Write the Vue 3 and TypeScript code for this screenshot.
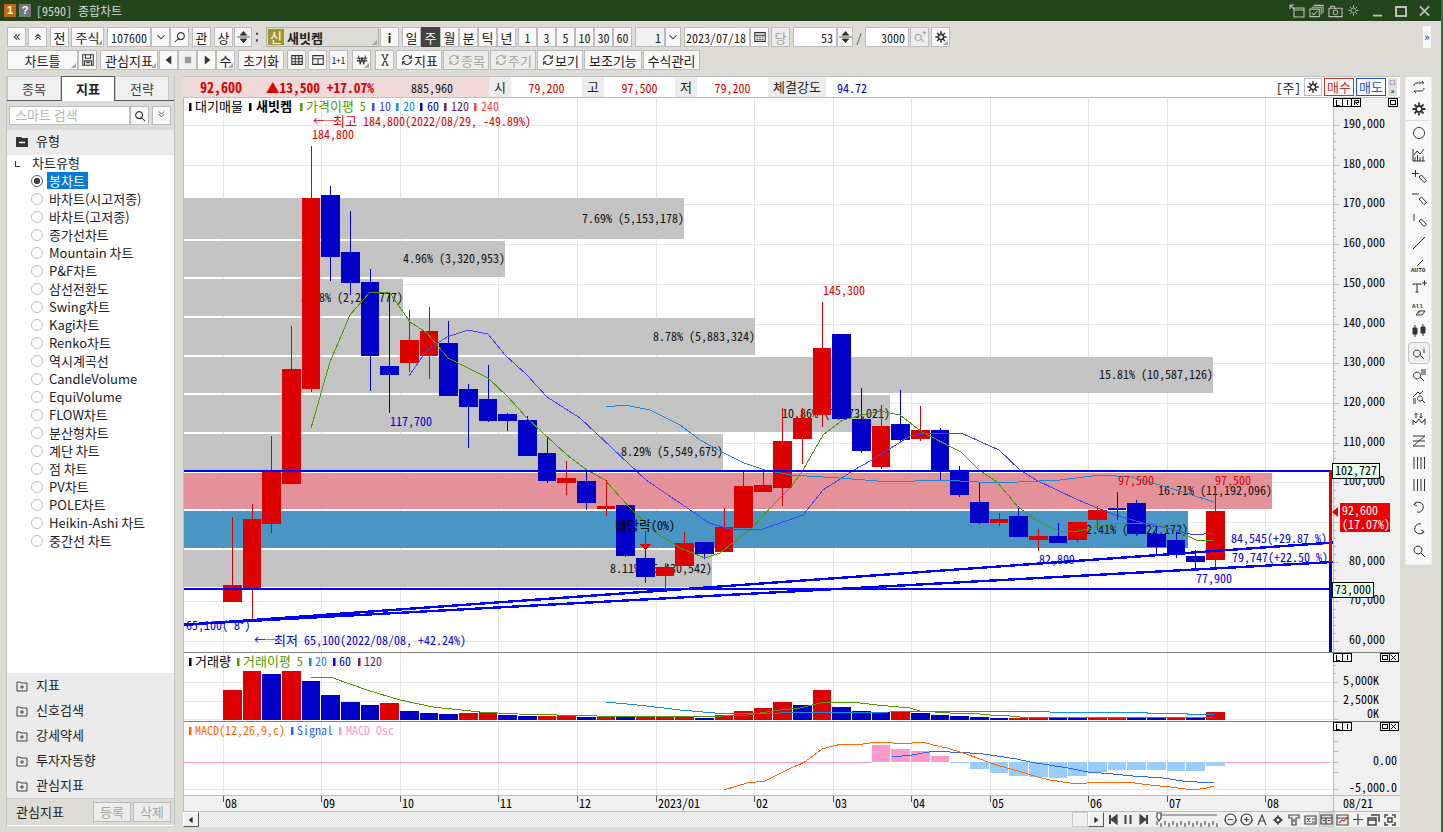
<script setup lang="ts">
type Btn = { t?: string; i?: string; w: number; g?: number; c?: string }
type Glyph = { d: string; t?: string; fill?: boolean; bold?: boolean }

const ICONS: Record<string, string> = {
  dl: 'M8 5L5 8l3 3M11 5L8 8l3 3',
  du: 'M5 8l3-3 3 3M5 11l3-3 3 3',
  chev: 'M4 6l4 4 4-4',
  search: 'M9 3a4 4 0 1 1-.01 0M6 10l-4 4',
  searchR: 'M7 3a4 4 0 1 0 .01 0M10 10l4 4',
  updown: 'M4.500 6l3.500-4 3.500 4zM1 8h14M4.500 10h7L8 14z',
  dots: 'M8 3v2.500M8 10.500V13',
  cal: 'M2 3h12v10H2zM2 6h12M4 8h2M7 8h2M10 8h2M4 10.500h2M7 10.500h2M10 10.500h2',
  qplus: 'M6 5a3.500 3.500 0 1 0 .01 0M9 10l4 4M11 3h4M13 1v4',
  gear: 'M8 1.500v3M8 11.500v3M1.500 8h3M11.500 8h3M3.500 3.500l2 2M10.500 10.500l2 2M12.500 3.500l-2 2M5.500 10.500l-2 2M8 5a3 3 0 1 0 .01 0',
  save: 'M2 2h12v12H2zM5 2v4h6V2M4 9h8v5H4zM6 11h4',
  left: 'M10 4v8L5 8z',
  right: 'M6 4v8l5-4z',
  stop: 'M5 5h6v6H5z',
  grid: 'M2 3h12v10H2zM2 6.500h12M2 10h12M6 3v10M10 3v10',
  layout: 'M2 3h12v10H2zM2 6.500h12M8 6.500V13',
  won: 'M2 6h12M2 9h12M4 3l2 10 2-8 2 8 2-10',
  tool: 'M5 2l6 12M11 2L5 14M4 2h3M9 14h3M9 2h3M4 14h3',
  cycle: 'M3 8a5 5 0 0 1 9-3l1 1M13 8a5 5 0 0 1-9 3l-1-1M13 2.500V6h-3M3 13.500V10h3',
}

const row1: Btn[] = [
  { i: 'dl', w: 19 }, { i: 'du', w: 19, g: 2 }, { t: '전', w: 19, g: 3 }, { t: '주식', w: 33, g: 2, c: 'corner' },
  { t: '107600', w: 44, g: 3, c: 'field' }, { i: 'chev', w: 19 }, { i: 'search', w: 19 },
  { t: '관', w: 19, g: 3 }, { t: '상', w: 19, g: 3 }, { i: 'updown', w: 18, g: 1, c: 'spin' }, { i: 'dots', w: 7, g: 1, c: 'flat' },
]
const periods: Btn[] = [
  { t: 'i', w: 19, g: 1, c: 'strong' }, { t: '일', w: 19, g: 3 }, { t: '주', w: 19, c: 'dark' }, { t: '월', w: 19 }, { t: '분', w: 19 },
  { t: '틱', w: 19 }, { t: '년', w: 19 }, { t: '1', w: 19, g: 2 }, { t: '3', w: 19 }, { t: '5', w: 19 }, { t: '10', w: 19 },
  { t: '30', w: 19 }, { t: '60', w: 19 }, { t: '1', w: 30, g: 3, c: 'field idle' }, { i: 'chev', w: 16 },
  { t: '2023/07/18', w: 66, g: 3, c: 'field' }, { i: 'cal', w: 19 }, { t: '당', w: 19, g: 2, c: 'off' },
  { t: '53', w: 44, g: 3, c: 'field' }, { i: 'updown', w: 16, c: 'spin' }, { t: '/', w: 12, c: 'flat' },
  { t: '3000', w: 44, c: 'field' }, { i: 'qplus', w: 19, g: 1, c: 'off' }, { i: 'gear', w: 19, g: 2, c: 'corner heavy' },
]
const row2: Btn[] = [
  { t: '차트틀', w: 71, c: 'corner' }, { i: 'save', w: 19 }, { t: '관심지표', w: 58, g: 3, c: 'corner' },
  { i: 'left', w: 19, g: 1, c: 'solid' }, { i: 'stop', w: 19, c: 'solid idle' }, { i: 'right', w: 19, c: 'solid' }, { t: '수', w: 19, c: 'corner' },
  { t: '초기화', w: 46, g: 3 }, { i: 'grid', w: 19, g: 3 }, { i: 'layout', w: 19, g: 2 }, { t: '1+1', w: 19, g: 2, c: 'tiny' },
  { i: 'won', w: 19, g: 4, c: 'corner' }, { i: 'tool', w: 19, g: 4 }, { i: 'cycle', t: '지표', w: 46, g: 2 },
  { i: 'cycle', t: '종목', w: 46, g: 1, c: 'off' }, { i: 'cycle', t: '주기', w: 46, g: 1, c: 'off' }, { i: 'cycle', t: '보기', w: 46, g: 1 },
  { t: '보조기능', w: 58, g: 1 }, { t: '수식관리', w: 57, g: 1 },
]

const chartTypes = ['봉차트', '바차트(시고저종)', '바차트(고저종)', '종가선차트', 'Mountain 차트', 'P&F차트', '삼선전환도', 'Swing차트',
  'Kagi차트', 'Renko차트', '역시계곡선', 'CandleVolume', 'EquiVolume', 'FLOW차트', '분산형차트', '계단 차트', '점 차트', 'PV차트',
  'POLE차트', 'Heikin-Ashi 차트', '중간선 차트']
const groups = ['지표', '신호검색', '강세약세', '투자자동향', '관심지표']

const runs = (s: string) => s.match(/[가-힣]+|[^가-힣]+/g) ?? []
const isKo = (s?: string) => !!s && /[가-힣]/.test(s)

// [color, body top, body bottom, wick top, wick bottom] in screen pixels
const raw: [string, number, number, number, number][] = [
  ['r', 585, 602, 517, 602], ['r', 519, 588, 504, 619], ['r', 471, 524, 436, 533], ['r', 369, 484, 326, 484],
  ['r', 198, 389, 146, 392], ['b', 195, 257, 186, 281], ['b', 252, 283, 211, 295], ['b', 282, 356, 269, 391],
  ['b', 366, 375, 294, 413], ['r', 340, 363, 310, 372], ['r', 331, 356, 307, 379], ['b', 343, 396, 321, 396],
  ['b', 389, 407, 384, 448], ['b', 399, 421, 365, 422], ['b', 414, 421, 413, 431], ['b', 420, 456, 416, 456],
  ['b', 453, 481, 437, 483], ['r', 478, 483, 461, 495], ['b', 481, 503, 472, 510], ['r', 506, 509, 480, 516],
  ['b', 505, 556, 505, 557], ['b', 558, 577, 550, 583], ['r', 567, 576, 563, 588], ['r', 543, 566, 532, 566],
  ['b', 542, 554, 542, 559], ['r', 527, 552, 508, 552], ['r', 486, 528, 472, 528], ['r', 485, 492, 472, 492],
  ['r', 441, 488, 408, 506], ['r', 418, 439, 408, 464], ['r', 348, 415, 302, 427], ['b', 334, 419, 334, 419],
  ['b', 419, 451, 388, 453], ['r', 426, 467, 405, 469], ['b', 424, 440, 390, 442], ['r', 430, 439, 406, 441],
  ['b', 430, 470, 428, 480], ['b', 471, 495, 466, 497], ['b', 502, 523, 483, 524], ['r', 519, 523, 513, 526],
  ['b', 516, 537, 506, 537], ['r', 536, 540, 529, 551], ['b', 536, 543, 523, 543], ['r', 522, 540, 522, 542],
  ['r', 510, 520, 506, 530], ['b', 508, 510, 492, 520], ['b', 503, 534, 500, 535], ['b', 534, 547, 526, 556],
  ['b', 540, 555, 530, 558], ['b', 556, 562, 550, 569], ['r', 511, 560, 490, 568],
]
const slotX = (i: number) => 223 + Math.round(i * 19.66)
const slotW = (i: number) => slotX(i + 1) - slotX(i) - 1
const COLORS: Record<string, string> = { r: '#dd0000', b: '#0000c8' }
const candles = raw.map((c, i) => ({
  x: slotX(i), w: slotW(i), cx: slotX(i) + Math.floor(slotW(i) / 2),
  fill: COLORS[c[0]], top: c[1], h: c[2] - c[1], wt: c[3], wb: c[4],
}))

const volRaw: [string, number][] = [
  ['r', 690], ['r', 671], ['b', 674], ['r', 671], ['b', 681], ['b', 695], ['b', 702], ['b', 705], ['r', 703], ['b', 711], ['b', 713],
  ['b', 714], ['r', 713], ['r', 712], ['b', 715], ['b', 716], ['r', 716], ['r', 715], ['b', 717], ['r', 716], ['b', 717], ['r', 716],
  ['r', 716], ['r', 716], ['b', 718], ['r', 715], ['r', 711], ['r', 708], ['r', 702], ['b', 705], ['r', 690], ['b', 707], ['b', 711],
  ['b', 712], ['r', 711], ['b', 713], ['b', 715], ['b', 716], ['b', 717], ['b', 718], ['r', 718], ['r', 718], ['b', 718], ['b', 718],
  ['r', 718], ['r', 718], ['b', 718], ['b', 718], ['r', 718], ['b', 718], ['r', 712],
]
const volume = volRaw.map((v, i) => ({ x: slotX(i), w: slotW(i), y: v[1], h: 720 - v[1], fill: COLORS[v[0]] }))

const oscRaw: [number, number][] = [
  [33, 745], [34, 749], [35, 751], [36, 756], [37, 763], [38, 769], [39, 773], [40, 776], [41, 777], [42, 778], [43, 776],
  [44, 772], [45, 770], [46, 770], [47, 770], [48, 771], [49, 771], [50, 766],
]
const osc = oscRaw.map(([i, y]) => ({
  x: slotX(i), w: slotW(i), y: Math.min(y, 762), h: Math.abs(y - 762), fill: y < 762 ? '#ff99cc' : '#99ccff',
}))

const prices = Array.from({ length: 14 }, (_, k) => {
  const value = 190000 - k * 10000
  return { y: Math.round(125 + k * 39.7), label: value.toLocaleString('en-US') }
})
const minorTicks = Array.from({ length: 70 }, (_, k) => ({ y: Math.round(125 + k * 7.94), major: k % 5 === 0 }))
const months = [
  { x: 223, t: '08' }, { x: 321, t: '09' }, { x: 400, t: '10' }, { x: 498, t: '11' }, { x: 577, t: '12' }, { x: 656, t: '2023/01' },
  { x: 754, t: '02' }, { x: 833, t: '03' }, { x: 911, t: '04' }, { x: 990, t: '05' }, { x: 1088, t: '06' }, { x: 1167, t: '07' }, { x: 1265, t: '08' },
]

const profile = [
  { y: 198, h: 41, x2: 684, t: '7.69% (5,153,178)', c: '#c3c3c3' },
  { y: 241, h: 36, x2: 505, t: '4.96% (3,320,953)', c: '#c3c3c3' },
  { y: 279, h: 37, x2: 403, t: '3.38% (2,263,777)', c: '#c3c3c3' },
  { y: 318, h: 37, x2: 755, t: '8.78% (5,883,324)', c: '#c3c3c3' },
  { y: 357, h: 36, x2: 1213, t: '15.81% (10,587,126)', c: '#c3c3c3' },
  { y: 395, h: 37, x2: 890, t: '10.86% (7,273,021)', c: '#c3c3c3' },
  { y: 434, h: 36, x2: 723, t: '8.29% (5,549,675)', c: '#c3c3c3' },
  { y: 473, h: 36, x2: 1272, t: '16.71% (11,192,096)', c: '#e59199' },
  { y: 511, h: 37, x2: 1188, t: '2.41% (1,622,172)', c: '#4996c4' },
  { y: 550, h: 37, x2: 712, t: '8.11% (5,430,542)', c: '#c3c3c3' },
]

const ma5 = '311,428 330,362 350,315 370,292 390,293 410,322 427,333 448,358 488,378 508,397 527,418 543,433 567,455 587,470 605,480 630,508 655,532 680,548 705,558 720,553 752,528 771,507 791,487 803,470 823,435 843,420 862,415 880,411 900,415 922,432 961,452 979,470 997,482 1018,507 1036,520 1058,531 1078,531 1115,523 1155,523 1179,532 1196,540 1214,541'
const ma10 = '409,376 427,350 447,337 468,330 488,334 505,355 527,375 547,397 580,418 612,448 646,480 680,503 709,523 730,529 763,529 803,515 823,490 854,470 872,460 910,436 930,433 961,433 999,450 1020,470 1036,480 1078,500 1115,515 1143,523 1167,528 1194,535 1214,533'
const ma20 = '606,407 625,405 650,410 680,425 700,440 722,452 744,463 765,470 791,475 839,478 890,482 941,480 997,483 1060,480 1100,475 1131,477 1167,487 1214,502'
const volMa5 = '311,677 333,678 367,690 400,700 433,707 480,712 498,713 518,714 557,715 597,716 697,716 723,716 747,715 767,712 780,710 800,708 820,703 852,702 877,705 910,708 920,711 950,713 980,714 990,715 1010,716 1029,718 1213,717'
const volMa20 = '606,702 647,706 680,710 715,713 780,713 890,712 920,711 1049,711 1050,712 1147,712 1147,713 1187,713 1187,714 1215,714'
const macd = '724,790 747,783 765,781 773,777 793,767 803,763 813,756 822,749 833,746 842,744 863,744 877,742 892,742 893,743 912,743 913,742 923,742 933,745 947,748 963,753 983,760 990,763 1028,774 1038,777 1050,780 1070,783 1087,783 1107,782 1127,782 1150,785 1170,787 1193,790 1207,788 1214,786'
const signal = '892,757 912,755 935,751 950,752 970,753 983,754 997,756 1017,759 1030,762 1068,768 1088,772 1113,774 1133,776 1163,778 1183,781 1197,782 1214,782'

const notes = [
  { x: 313, y: 126, t: '최고 184,800(2022/08/29, -49.89%)', c: '#e00000', arrow: true },
  { x: 312, y: 139, t: '184,800', c: '#e00000' },
  { x: 390, y: 426, t: '117,700', c: '#0000e0' },
  { x: 823, y: 295, t: '145,300', c: '#e00000' },
  { x: 1118, y: 485, t: '97,500', c: '#e00000' },
  { x: 1215, y: 485, t: '97,500', c: '#e00000' },
  { x: 1039, y: 564, t: '82,809', c: '#0000e0' },
  { x: 1196, y: 583, t: '77,900', c: '#0000e0' },
  { x: 615, y: 530, t: '배당락(0%)', c: '#000' },
  { x: 1231, y: 543, t: '84,545(+29.87 %)', c: '#0000e0' },
  { x: 1232, y: 562, t: '79,747(+22.50 %)', c: '#0000e0' },
  { x: 186, y: 630, t: '65,100(  8°)', c: '#0000e0' },
  { x: 254, y: 645, t: '최저 65,100(2022/08/08, +42.24%)', c: '#0000e0', arrow: true },
]

const priceLegend = [
  { m: 189, x: 195, t: '대기매물', c: '#000', k: '#000' }, { m: 249, x: 256, t: '새빗켐', c: '#000', k: '#000', b: true },
  { m: 300, x: 306, t: '가격이평 5', c: '#4f9a00', k: '#4f9a00' }, { m: 372, x: 379, t: '10', c: '#4444ff', k: '#4444ff' },
  { m: 396, x: 403, t: '20', c: '#1a8ce0', k: '#1a8ce0' }, { m: 420, x: 427, t: '60', c: '#0000c8', k: '#0000c8' },
  { m: 444, x: 451, t: '120', c: '#7a1f5a', k: '#7a1f5a' }, { m: 474, x: 481, t: '240', c: '#ff4444', k: '#ff4444' },
]
const volLegend = [
  { m: 189, x: 195, t: '거래량', c: '#000', k: '#000' }, { m: 237, x: 243, t: '거래이평 5', c: '#4f9a00', k: '#4f9a00' },
  { m: 309, x: 315, t: '20', c: '#1a8ce0', k: '#1a8ce0' }, { m: 333, x: 339, t: '60', c: '#0000c8', k: '#0000c8' },
  { m: 358, x: 364, t: '120', c: '#7a1f5a', k: '#7a1f5a' },
]
const macdLegend = [
  { m: 189, x: 195, t: 'MACD(12,26,9,c)', c: '#ff6600', k: '#ff6600' }, { m: 291, x: 297, t: 'Signal', c: '#2b67f0', k: '#2b67f0' },
  { m: 339, x: 346, t: 'MACD Osc', c: '#ff99cc', k: '#ff99cc' },
]
const legends = [
  { y: 111, items: priceLegend },
  { y: 666, items: volLegend },
  { y: 735, items: macdLegend },
]

const rail: Glyph[] = [
  { d: 'M3 7c0-2 1-3 3-3h7l-2-2M13 9c0 2-1 3-3 3H3l2 2' },
  { d: ICONS.gear, bold: true },
  { d: 'M8 2.500a5.500 5.500 0 1 0 .01 0' },
  { d: 'M2 2v12h12M4 14v-4M6.500 14V8M9 14v-4M12 14V9M3 8l3-4 3 3 4-5' },
  { d: 'M1 4.500h7M4.500 1v7M8 8l2.500-2 5 5.500-2.500 2z' },
  { d: 'M1 3h7M8 8l2.500-2 5 5.500-2.500 2z' },
  { d: 'M3 1v7M8 8l2.500-2 5 5.500-2.500 2z' },
  { d: 'M2 14L14 2' },
  { d: 'M6 9l6-6', t: 'AUTO' },
  { d: 'M11 4h5M13.500 1.500v5M2 6V5h8v1M6 5v8M4.500 13h3' },
  { d: 'M5 14l3-4h6l-3 4zM8 10v2.500', t: 'All' },
  { d: 'M2 5h4v6H2zM4 2v12M10 4h4v6h-4zM12 1v12', fill: true },
  { d: 'M6 5a3.500 3.500 0 1 0 .01 0M9 10l4 4M13 2v.500M13 4v4' },
  { d: 'M6 5a3.500 3.500 0 1 0 .01 0M9 10l4 4M10 3h5M10 5h5M10 7h5' },
  { d: 'M2 8l5-5 2 2 3-3M2 10h3M2 12h3M2 14h3M9 7a2.500 2.500 0 1 0 .01 0M11 11l3 3' },
  { d: 'M2 14V9l3 3 3-4 3 4 3-4v6M5 7V2M3.500 3.500L5 2l1.500 1.500M10 2v5M8.500 5.500L10 7l1.500-1.500' },
  { d: 'M2 3h12M2 8h12M2 13h12M14 3L2 13' },
  { d: 'M3 2v12M6.500 2v12M10 2v12M13.500 2v12' },
  { d: 'M3 2v12M6.500 2v12M10 2v12M13.500 2v12' },
  { d: 'M3 5.500A5 5 0 1 1 6 13M5.500 3L3 5.500 6 7' },
  { d: 'M13 10.500A5 5 0 1 1 10 3M10.500 13l2.500-2.500-3-1.500' },
  { d: 'M7 3a4 4 0 1 0 .01 0M10 10l4 4' },
]
const sliderTicks = Array.from({ length: 16 }, (_, k) => 1157 + k * 4)
</script>

<template>
  <div class="app">
    <header class="titlebar">
      <span class="tag orange">1</span>
      <span class="tag grey">?</span>
      <span class="title mono">[9590] 종합차트</span>
      <span class="winicons">
        <svg viewBox="0 0 16 14" width="16" height="14"><path d="M5 4h10v9H5zM5 6h10M1 1h4M1 1v4M1 1l4 4" /></svg>
        <svg viewBox="0 0 16 14" width="15" height="14"><path d="M5 1h10v8M3 3h10v8M1 5h10v8H1zM3 9l2 2 4-4" /></svg>
        <svg viewBox="0 0 16 14" width="15" height="14"><path d="M1 4h14v9H1zM3 4V2h4v2M8 6a2.500 2.500 0 1 0 .01 0" /></svg>
        <svg viewBox="0 0 16 16" width="13" height="13"><path :d="ICONS.gear" /></svg>
        <svg class="ctl" viewBox="0 0 12 12" width="11" height="12"><path d="M1 11h10" /></svg>
        <svg class="ctl" viewBox="0 0 12 12" width="12" height="12"><path d="M1 2h10v9H1z" /></svg>
        <svg class="ctl" viewBox="0 0 12 12" width="11" height="12"><path d="M1 1l10 10M11 1L1 11" /></svg>
      </span>
    </header>

    <section class="toolbars mono">
      <div class="row">
        <button v-for="(b, n) in row1" :key="n" class="tb" :class="[b.c, { num: !isKo(b.t) }]" :style="{ width: b.w + 'px', marginLeft: (b.g || 0) + 'px' }">
          <svg v-if="b.i" class="ico" viewBox="0 0 16 16"><path :d="ICONS[b.i]" /></svg>{{ b.t }}
        </button>
        <div class="namebox corner"><span class="badge">신</span><b>새빗켐</b></div>
        <button v-for="(b, n) in periods" :key="n" class="tb" :class="[b.c, { num: !isKo(b.t) }]" :style="{ width: b.w + 'px', marginLeft: (b.g || 0) + 'px' }">
          <svg v-if="b.i" class="ico" viewBox="0 0 16 16"><path :d="ICONS[b.i]" /></svg>{{ b.t }}
        </button>
      </div>
      <div class="row">
        <button v-for="(b, n) in row2" :key="n" class="tb" :class="[b.c, { num: !isKo(b.t) }]" :style="{ width: b.w + 'px', marginLeft: (b.g || 0) + 'px' }">
          <svg v-if="b.i" class="ico" viewBox="0 0 16 16"><path :d="ICONS[b.i]" /></svg>{{ b.t }}
        </button>
      </div>
      <div class="collapse">»</div>
    </section>

    <main class="workspace">
      <aside class="left">
        <nav class="tabs">
          <span class="tab">종목</span>
          <span class="tab on">지표</span>
          <span class="tab">전략</span>
        </nav>
        <div class="searchrow">
          <span class="searchbox">스마트 검색</span>
          <span class="sbtn"><svg class="ico" viewBox="0 0 16 16"><path :d="ICONS.searchR" /></svg></span>
          <span class="sbtn gap"><svg class="ico small" viewBox="0 0 16 16"><path :d="ICONS.chev" /><path d="M4 2l4 4 4-4" /></svg></span>
        </div>
        <div class="grouphead">
          <svg class="folder" viewBox="0 0 12 12"><path d="M0 1h5l1 1h6v9H0z" /><path class="cut" d="M3 6.500h6" /></svg>
          <span class="lift">유형</span>
        </div>
        <div class="tree">
          <div class="treetop"><span class="elbow"></span><span class="lift">차트유형</span></div>
          <div v-for="(t, n) in chartTypes" :key="t" class="treeitem">
            <span class="radio" :class="{ sel: n === 0 }"></span>
            <span class="label lift" :class="{ sel: n === 0 }">{{ t }}</span>
          </div>
        </div>
        <div class="groups">
          <div v-for="g in groups" :key="g" class="group">
            <svg class="plus" viewBox="0 0 12 12"><path d="M1 2h3l1 1h6v8H1zM6 5v4M4 7h4" /></svg>
            <span class="lift">{{ g }}</span>
          </div>
        </div>
        <div class="favbar">
          <span class="lift">관심지표</span>
          <span class="favbtns"><span class="favbtn">등록</span><span class="favbtn">삭제</span></span>
        </div>
      </aside>

      <div class="center">
        <div class="info mono">
          <div class="pink">
            <b class="big first">92,600</b>
            <b class="big rise">▲13,500 +17.07%</b>
            <span class="vol">885,960</span>
          </div>
          <span class="cell">시</span><span class="val">79,200</span>
          <span class="cell">고</span><span class="val">97,500</span>
          <span class="cell">저</span><span class="val">79,200</span>
          <span class="cell wide">체결강도</span><span class="strength">94.72</span>
          <span class="unit">[주]</span>
          <span class="cfg"><svg class="ico heavy" viewBox="0 0 16 16"><path :d="ICONS.gear" /></svg></span>
          <span class="order buy">매수</span>
          <span class="order sell">매도</span>
          <span class="minis"><i class="mini">□</i><i class="mini">×</i></span>
        </div>

        <svg class="chart" viewBox="183 98 1217 714" width="1217" height="714">
          <rect x="183" y="98" width="1150" height="714" fill="#fff" />
          <rect x="183" y="796" width="1150" height="16" fill="#f0f0f0" />
          <g stroke="#e6e6e6" shape-rendering="crispEdges">
            <line v-for="p in prices" :key="p.y" x1="183" x2="1333" :y1="p.y" :y2="p.y" />
            <line v-for="m in months" :key="m.x" :x1="m.x" :x2="m.x" y1="98" y2="795" />
            <line x1="183" x2="1333" y1="682" y2="682" />
            <line x1="183" x2="1333" y1="701" y2="701" />
            <line x1="183" x2="1333" y1="719" y2="719" />
            <line x1="183" x2="1333" y1="789" y2="789" />
          </g>

          <g class="t">
            <rect v-for="p in profile" :key="p.y" x="183" :y="p.y" :width="p.x2 - 183" :height="p.h" :fill="p.c" />
            <text v-for="p in profile" :key="p.t" :x="p.x2" :y="p.y + p.h / 2 + 4" text-anchor="end" fill="#111">{{ p.t }}</text>
          </g>

          <g shape-rendering="crispEdges">
            <template v-for="c in candles" :key="c.x">
              <line :x1="c.cx + 0.5" :x2="c.cx + 0.5" :y1="c.wt" :y2="c.wb" :stroke="c.fill" />
              <rect :x="c.x" :y="c.top" :width="c.w" :height="c.h" :fill="c.fill" />
            </template>
            <path d="M645.500 531v13" stroke="#e00000" fill="none" />
            <path d="M640 544h11l-5.500 6z" fill="#e00000" />
          </g>

          <g fill="none" shape-rendering="crispEdges">
            <polyline :points="ma5" stroke="#4f9a00" />
            <polyline :points="ma10" stroke="#4444ff" />
            <polyline :points="ma20" stroke="#1a8ce0" />
            <line x1="183" x2="1333" y1="470.500" y2="470.500" stroke="#0000ff" stroke-width="2" />
            <line x1="183" x2="1333" y1="589" y2="589" stroke="#0000ff" stroke-width="2" />
            <line x1="183" x2="1333" y1="625" y2="542.500" stroke="#0000ff" stroke-width="2.400" />
            <line x1="183" x2="1333" y1="624.600" y2="562" stroke="#0000ff" stroke-width="2.400" />
            <line x1="1330.500" x2="1330.500" y1="470" y2="562" stroke="#e00000" stroke-width="3" />
            <line x1="1330.500" x2="1330.500" y1="562" y2="652" stroke="#0000c8" stroke-width="3" />
          </g>

          <g class="t">
            <text v-for="n in notes" :key="n.t + n.x" :x="n.x" :y="n.y" :fill="n.c"><tspan v-if="n.arrow">←─</tspan><tspan v-for="(r, k) in runs(n.t)" :key="k" :x="k === 0 && n.arrow ? n.x + 20 : undefined" :class="{ ko: isKo(r) }">{{ r }}</tspan></text>
          </g>

          <g shape-rendering="crispEdges">
            <rect v-for="v in volume" :key="v.x" :x="v.x" :y="v.y" :width="v.w" :height="v.h" :fill="v.fill" />
            <rect v-for="o in osc" :key="o.x" :x="o.x" :y="o.y" :width="o.w" :height="o.h" :fill="o.fill" />
          </g>
          <g fill="none" shape-rendering="crispEdges">
            <polyline :points="volMa5" stroke="#4f9a00" />
            <polyline :points="volMa20" stroke="#1a8ce0" />
            <line x1="183" x2="872" y1="762.500" y2="762.500" stroke="#ff99cc" />
            <line x1="951" x2="969" y1="762.500" y2="762.500" stroke="#99ccff" />
            <line x1="1225" x2="1330" y1="762.500" y2="762.500" stroke="#ff99cc" />
            <polyline :points="signal" stroke="#2b67f0" />
            <polyline :points="macd" stroke="#ff6600" />
          </g>

          <g class="t">
            <template v-for="l in legends" :key="l.y">
              <template v-for="i in l.items" :key="i.t">
                <rect :x="i.m" :y="l.y - 8" width="2.500" height="8" :fill="i.k" />
                <text :x="i.x" :y="l.y" :fill="i.c" :font-weight="i.b ? 700 : 400"><tspan v-for="(r, k) in runs(i.t)" :key="k" :class="{ ko: isKo(r) }">{{ r }}</tspan></text>
              </template>
            </template>
          </g>

          <rect x="1333" y="98" width="67" height="714" fill="#f0f0f0" />
          <g stroke="#bdbdbd" shape-rendering="crispEdges">
            <line x1="1333.500" x2="1333.500" y1="98" y2="812" />
            <line v-for="k in minorTicks" :key="k.y" x1="1333" :x2="k.major ? 1339 : 1336" :y1="k.y" :y2="k.y" />
            <line v-for="y in [682, 701, 719, 741, 751, 762, 772, 789]" :key="y" x1="1333" x2="1338" :y1="y" :y2="y" />
            <line x1="183" x2="1400" y1="795.500" y2="795.500" />
            <line x1="183" x2="1400" y1="811.500" y2="811.500" />
            <line v-for="m in months" :key="'tick' + m.x" :x1="m.x" :x2="m.x" y1="796" y2="802" stroke="#555" />
          </g>
          <g stroke="#808080" shape-rendering="crispEdges">
            <line x1="183" x2="1400" y1="652.500" y2="652.500" />
            <line x1="183" x2="1400" y1="721.500" y2="721.500" />
            <line x1="183.500" x2="183.500" y1="98" y2="812" stroke="#bdbdbd" />
          </g>

          <g class="t" fill="#000">
            <text v-for="p in prices" :key="'l' + p.y" x="1385" :y="p.y + 3" text-anchor="end">{{ p.label }}</text>
            <text x="1379" y="685" text-anchor="end">5,000K</text>
            <text x="1379" y="704" text-anchor="end">2,500K</text>
            <text x="1379" y="718" text-anchor="end">0K</text>
            <text x="1397" y="765" text-anchor="end">0.00</text>
            <text x="1397" y="792" text-anchor="end">-5,000.0</text>
            <text x="1343" y="808">08/21</text>
            <text v-for="m in months" :key="'d' + m.x" :x="m.x + 2" y="808">{{ m.t }}</text>
          </g>

          <g class="t">
            <rect x="1332.500" y="463.500" width="47" height="15" fill="#e8ffe8" stroke="#000" />
            <text x="1335" y="475" fill="#000">102,727</text>
            <rect x="1332.500" y="582.500" width="41" height="15" fill="#e8ffe8" stroke="#000" />
            <text x="1335" y="594" fill="#000">73,000</text>
            <path d="M1332 512l6-5v10z" fill="#e00000" />
            <rect x="1340" y="503" width="50" height="29" fill="#f00000" />
            <text x="1342" y="515" fill="#fff">92,600</text>
            <text x="1342" y="529" fill="#fff">(17.07%)</text>
          </g>

          <g class="box" fill="#f4f4f4" stroke="#000" shape-rendering="crispEdges">
            <rect x="1333.500" y="98.500" width="9" height="8" /><rect x="1342.500" y="98.500" width="9" height="8" /><rect x="1351.500" y="98.500" width="9" height="8" />
            <rect x="1388.500" y="98.500" width="9" height="8" /><rect x="1390.500" y="100.500" width="5" height="4" fill="none" />
            <rect x="1333.500" y="653.500" width="9" height="8" /><rect x="1342.500" y="653.500" width="9" height="8" />
            <rect x="1380.500" y="653.500" width="9" height="8" /><rect x="1382.500" y="655.500" width="5" height="4" fill="none" />
            <rect x="1389.500" y="653.500" width="9" height="8" /><path d="M1391 655l5 5M1396 655l-5 5" />
            <rect x="1333.500" y="722.500" width="9" height="8" /><rect x="1342.500" y="722.500" width="9" height="8" />
            <rect x="1380.500" y="722.500" width="9" height="8" /><rect x="1382.500" y="724.500" width="5" height="4" fill="none" />
            <rect x="1389.500" y="722.500" width="9" height="8" /><path d="M1391 724l5 5M1396 724l-5 5" />
            <path d="M1336 100v5h4M1347 100v5M1354 105v-5h4v2.500h-4M1356 102.500l2 2.500M1336 655v5h4M1347 655v5M1336 724v5h4M1347 724v5" fill="none" />
          </g>
        </svg>

        <div class="scroll">
          <span class="sb"><svg class="ico" viewBox="0 0 16 16"><path :d="ICONS.left" /></svg></span>
          <span class="track"></span>
          <span class="thumb"></span>
          <span class="sb"><svg class="ico" viewBox="0 0 16 16"><path :d="ICONS.right" /></svg></span>
          <svg class="player" viewBox="1104 812 296 15" width="296" height="15">
            <g fill="none" stroke="#444" stroke-width="1.200">
              <path d="M1110 815v9M1125.500 815v9M1130.500 815v9M1147 815v9" stroke-width="2" />
              <path d="M1117 815v9l-6-4.500zM1140 815v9l6-4.500z" fill="#444" />
              <path d="M1157 815h60" stroke="#666" />
              <path d="M1157 813h4v5l-2 3-2-3z" fill="#fff" />
              <path v-for="t in sliderTicks" :key="t" :d="`M${t} ${t % 8 === 5 ? 821 : 823}v4`" stroke="#333" stroke-width="1" />
              <path d="M1230.500 814a5.500 5.500 0 1 0 .01 0M1228 819.500h5M1246.500 814a5.500 5.500 0 1 0 .01 0M1244 819.500h5M1246.500 817v5" />
              <path d="M1258 825l4-10 4 10M1260 821h4" />
              <path d="M1278 815.500v2M1278 822.500v2M1273.500 820h2M1280.500 820h2M1278 817.500a2.500 2.500 0 1 0 .01 0" stroke-width="2" />
              <path d="M1289 815h10v3h-3v7h-4v-7h-3zM1294 819v3" />
              <path d="M1305 816h11v8h-11zM1307 818l3 4M1310 818l-3 4M1312 819h3M1312 822h3" />
            </g>
            <rect x="1319" y="812" width="15" height="15" fill="#dcdcdc" stroke="#bbb" />
            <g fill="none" stroke="#444" stroke-width="1.200">
              <path d="M1321 815h11v9h-11zM1321 818h11M1326 818v6M1323 820.500h2M1328 820.500h2" />
              <path d="M1337 815h11v10h-11zM1337 818h11" />
              <path d="M1339 823l3-3 2 1 3-3" stroke="#d03030" />
              <path d="M1358 814v11M1353 819.500h10" />
              <path d="M1371 815h8v7M1368 818h8v7h-8zM1368 820h8" stroke-width="1.500" />
              <path d="M1385 818v-3h3M1392 815h3v3M1395 822v3h-3M1388 825h-3v-3M1388 818h4v4h-4z" stroke-width="1.500" />
            </g>
          </svg>
        </div>
      </div>

      <aside class="rail">
        <template v-for="(g, n) in rail" :key="n">
          <div v-if="n === 2" class="sep"></div>
          <span class="railitem" :class="{ hot: n === 12 }">
            <svg viewBox="0 0 16 16" width="16" height="16" class="railicon" :class="{ full: g.fill, thick: g.bold }">
              <path :d="g.d" />
              <text v-if="g.t === 'AUTO'" x="0" y="15" class="railtext">AUTO</text>
              <text v-if="g.t === 'All'" x="1" y="7" class="railtext">All</text>
            </svg>
          </span>
        </template>
      </aside>
    </main>
  </div>
</template>

<style scoped>
.app {
  width: 1441px;
  height: 832px;
  background: #dcdbd6;
  border-right: 2px solid #1f7d3f;
  overflow: hidden;
  font: 13px "Noto Sans CJK KR", "Noto Sans", sans-serif;
  color: #222;
}
.mono, .tb, .namebox {
  font-family: "Noto Sans Mono CJK KR", "Liberation Mono", "Noto Sans CJK KR", monospace;
}
.titlebar {
  height: 21px;
  background: #24451b;
  display: flex;
  align-items: center;
  padding-left: 4px;
  color: #d8d8d8;
}
.tag {
  width: 12px;
  height: 13px;
  margin-right: 3px;
  color: #fff;
  font: 700 11px/13px "Liberation Sans", sans-serif;
  text-align: center;
}
.orange { background: #c0680f; }
.grey { background: #787878; }
.title { margin-left: 2px; font-size: 12px; }
.winicons {
  margin-left: auto;
  margin-right: 11px;
  display: flex;
  align-items: center;
  gap: 4px;
}
.winicons svg { fill: none; stroke: #bdbdbd; stroke-width: 1.1; }
.winicons .ctl { stroke-width: 2; margin-left: 8px; }
.toolbars {
  position: relative;
  padding: 6px 0 6px 7px;
  display: flex;
  flex-direction: column;
  gap: 3px;
}
.row { display: flex; height: 20px; }
.tb {
  position: relative;
  flex: none;
  height: 20px;
  padding: 0;
  background: #f9f9f9;
  border: 1px solid #bcbcbc;
  color: #222;
  display: flex;
  align-items: center;
  justify-content: center;
  font-size: 13px;
  white-space: nowrap;
}
.tb.num { font-size: 12px; }
.tb.tiny { font-size: 9px; }
.tb.strong { font-weight: 700; }
.tb.dark { background: #444; color: #fff; border-color: #444; }
.tb.off { color: #a6a69e; background: #ececec; }
.tb.off .ico { stroke: #a6a69e; }
.tb.field { background: #fff; justify-content: flex-end; padding-right: 3px; }
.tb.idle { background: #f0f0f0; }
.tb.flat { background: transparent; border-color: transparent; color: #444; }
.tb.flat .ico { stroke-width: 2; }
.tb.spin { background: #f4f4f4; }
.tb.spin .ico { width: 15px; height: 18px; stroke-width: 0.8; }
.tb.spin .ico path { fill: #333; }
.tb.solid .ico path { fill: #333; }
.tb.idle .ico path { fill: #999; stroke: #999; }
.corner { position: relative; }
.corner::after {
  content: "";
  position: absolute;
  right: 1px;
  bottom: 1px;
  border-left: 5px solid transparent;
  border-bottom: 5px solid #aaa;
}
.ico {
  width: 14px;
  height: 14px;
  flex: none;
  fill: none;
  stroke: #333;
  stroke-width: 1.2;
}
.tb.heavy .ico, .ico.heavy { stroke-width: 1.8; }
.namebox {
  width: 113px;
  height: 20px;
  margin-left: 6px;
  flex: none;
  display: flex;
  align-items: center;
  box-sizing: border-box;
  border: 1px solid #b0b0ab;
  background: #dcdbd6;
  font-size: 13px;
}
.badge {
  width: 16px;
  height: 16px;
  margin: 0 3px 0 1px;
  background: #a09432;
  color: #fff;
  text-align: center;
  line-height: 16px;
}
.collapse {
  position: absolute;
  right: 10px;
  top: 5px;
  width: 8px;
  height: 22px;
  background: #f8f8f8;
  font-size: 11px;
  line-height: 20px;
  text-align: center;
}
.workspace { display: flex; height: 752px; align-items: flex-start; }
.left {
  width: 169px;
  margin-left: 6px;
  height: 751px;
  flex: none;
  display: flex;
  flex-direction: column;
  box-sizing: border-box;
  border-right: 1px solid #c4c4c4;
  border-left: 1px solid #c4c4c4;
}
.lift { position: relative; top: -1px; }
.tabs { display: flex; height: 25px; box-sizing: border-box; border-bottom: 1px solid #555; }
.tab {
  width: 54px;
  height: 24px;
  box-sizing: border-box;
  text-align: center;
  line-height: 23px;
  background: #f0f0f0;
  border: 1px solid #c8c8c8;
  border-bottom: 0;
  color: #444;
}
.tab.on {
  height: 25px;
  background: #fff;
  border: 1px solid #555;
  border-bottom: 0;
  font-weight: 700;
  color: #222;
}
.searchrow { height: 29px; display: flex; align-items: center; padding-left: 2px; }
.searchbox {
  width: 121px;
  height: 19px;
  box-sizing: border-box;
  border: 1px solid #bcbcbc;
  background: #fff;
  color: #b8b8b8;
  padding-left: 5px;
  line-height: 16px;
}
.sbtn {
  width: 19px;
  height: 19px;
  box-sizing: border-box;
  border: 1px solid #bcbcbc;
  background: #f8f8f8;
  display: flex;
  align-items: center;
  justify-content: center;
}
.sbtn.gap { margin-left: 3px; }
.ico.small { width: 11px; height: 11px; }
.grouphead {
  height: 25px;
  background: #ebebeb;
  display: flex;
  align-items: center;
  padding-left: 9px;
  gap: 8px;
  box-sizing: border-box;
  padding-bottom: 2px;
}
.folder { width: 12px; height: 12px; fill: #333; flex: none; }
.folder .cut { stroke: #fff; stroke-width: 1.5; fill: none; }
.tree { height: 518px; background: #fff; box-sizing: border-box; }
.treetop { height: 17px; padding-left: 8px; display: flex; align-items: center; line-height: 17px; }
.elbow {
  width: 4px;
  height: 5px;
  margin-right: 12px;
  border-left: 1px solid #333;
  border-bottom: 1px solid #333;
}
.treeitem { height: 18px; display: flex; align-items: center; padding-left: 24px; }
.radio {
  width: 12px;
  height: 12px;
  box-sizing: border-box;
  border: 1px solid #bdbdbd;
  border-radius: 50%;
  background: #fff;
  margin-right: 6px;
  flex: none;
}
.radio.sel {
  border: 1px solid #666;
  background: radial-gradient(circle, #444 0 3px, #fff 3.5px);
}
.label { padding: 0 2px 0 0; white-space: nowrap; color: #222; line-height: 17px; }
.label.sel { background: #0a7ad8; color: #fff; padding: 0 3px 0 2px; margin-left: -2px; }
.groups { background: #ebebeb; }
.group {
  height: 25px;
  display: flex;
  align-items: center;
  padding-left: 9px;
  gap: 8px;
}
.plus { width: 12px; height: 12px; fill: none; stroke: #444; flex: none; }
.favbar {
  height: 28px;
  border-top: 1px solid #c8c8c8;
  box-sizing: border-box;
  padding-left: 9px;
  display: flex;
  align-items: center;
  justify-content: space-between;
  border-bottom: 1px solid #fff;
}
.favbtns { display: flex; gap: 2px; margin-right: 3px; }
.favbtn {
  width: 38px;
  height: 20px;
  box-sizing: border-box;
  border: 1px solid #bcbcbc;
  background: #ececec;
  color: #a6a69e;
  text-align: center;
  line-height: 17px;
}
.center { width: 1217px; margin-left: 8px; flex: none; }
.info {
  height: 22px;
  box-sizing: border-box;
  background: #fff;
  border-top: 1px solid #c0c0c0;
  border-bottom: 1px solid #c0c0c0;
  display: flex;
  align-items: center;
  font-size: 12px;
}
.pink {
  width: 306px;
  height: 20px;
  flex: none;
  background: #efd9d9;
  display: flex;
  align-items: center;
  color: #dd0000;
}
.big { font-size: 14px; }
.first { margin-left: 17px; }
.rise { margin-left: 24px; font-size: 13.500px; }
.vol { margin-left: 37px; color: #111; }
.cell {
  width: 22px;
  height: 20px;
  flex: none;
  background: #ececec;
  text-align: center;
  line-height: 19px;
  font-size: 13px;
}
.cell.wide { width: 58px; }
.val { width: 71px; flex: none; text-align: center; color: #d00000; }
.strength { margin-left: 11px; color: #0000c8; }
.unit { margin-left: auto; margin-right: 3px; font-size: 13px; }
.cfg {
  width: 18px;
  height: 18px;
  box-sizing: border-box;
  border: 1px solid #bcbcbc;
  display: flex;
  align-items: center;
  justify-content: center;
}
.order {
  width: 30px;
  height: 18px;
  margin-left: 2px;
  box-sizing: border-box;
  text-align: center;
  line-height: 15px;
  font-size: 13px;
}
.buy { border: 1px solid #d03030; color: #d03030; }
.sell { border: 1px solid #2050d8; color: #2050d8; }
.minis { display: flex; flex-direction: column; margin: 0 3px 0 2px; }
.mini {
  width: 9px;
  height: 9px;
  background: #e0e0e0;
  font: 8px/9px "Liberation Sans", sans-serif;
  text-align: center;
}
.chart { display: block; }
.t text {
  font-family: "Noto Sans Mono CJK KR", "Liberation Mono", "Noto Sans CJK KR", monospace;
  font-size: 12px;
}
.t .ko { font-size: 13px; }
.scroll { height: 15px; display: flex; background: #f0f0f0; }
.sb {
  width: 16px;
  height: 15px;
  box-sizing: border-box;
  background: #f0f0f0;
  border: 1px solid #fff;
  border-right-color: #555;
  border-bottom-color: #555;
  display: flex;
  align-items: center;
  justify-content: center;
  flex: none;
}
.sb .ico { width: 10px; height: 10px; }
.sb .ico path { fill: #222; }
.track {
  flex: 1;
  background: repeating-conic-gradient(#e4e4e4 0 25%, #f6f6f6 0 50%) 0 0 / 2px 2px;
}
.thumb { width: 16px; background: #f0f0f0; border: 1px solid #ccc; box-sizing: border-box; flex: none; }
.player { flex: none; }
.rail {
  width: 27px;
  height: 488px;
  margin: 1px 0 0 5px;
  flex: none;
  background: #f8f8f8;
  display: flex;
  flex-direction: column;
  align-items: center;
  border: 1px solid #ececec;
  border-top: 0;
  box-sizing: border-box;
}
.railitem {
  height: 22px;
  width: 22px;
  box-sizing: border-box;
  flex: none;
  display: flex;
  align-items: center;
  justify-content: center;
}
.railitem:first-child { margin-top: -1px; }
.railitem.hot { border: 1px solid #c4c4c4; border-radius: 4px; background: #f0f0f0; }
.railicon { fill: none; stroke: #333; stroke-width: 1; overflow: visible; }
.railicon.full { fill: #333; }
.railicon.thick { stroke-width: 1.8; }
.railtext {
  font: 700 6px "Liberation Mono", monospace;
  stroke: none;
  fill: #333;
}
.sep { height: 1px; width: 100%; margin: 0 0 1px; background: #dcdcdc; flex: none; }
</style>

<style>
html, body { margin: 0; background: #dcdbd6; overflow: hidden; }
</style>
